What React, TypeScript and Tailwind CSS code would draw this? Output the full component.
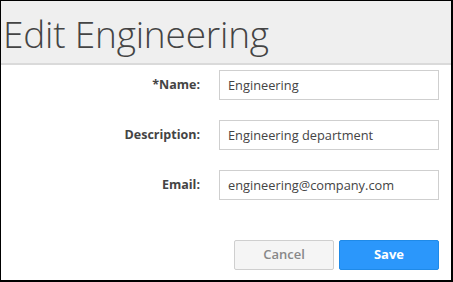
export default function App() {
  const fields = [
    { label: "*Name:", value: "Engineering" },
    { label: "Description:", value: "Engineering department" },
    { label: "Email:", value: "engineering@company.com" },
  ];

  return (
    <div className="box-border h-[282px] w-[453px] border-b-2 border-l border-r-2 border-t border-black bg-white font-['Open_Sans',sans-serif] text-[#444]">
      <div className="box-border flex h-[64px] items-center border-b-2 border-[#dadada] bg-[#efefef] pl-[2px] pt-[2px]">
        <h1 className="text-[37px] font-light leading-none tracking-[-0.2px] text-[#444]">Edit Engineering</h1>
      </div>
      <form className="pt-[5px]" onSubmit={(e) => e.preventDefault()}>
        <div className="flex flex-col gap-5">
          {fields.map((f) => (
            <div key={f.label} className="flex items-center">
              <label className="w-[199px] text-right text-[12.5px] font-bold text-[#444]">{f.label}</label>
              <input
                readOnly
                value={f.value}
                className="ml-[19px] box-border h-[30px] w-[220px] border border-[#cfcfcf] bg-white px-[8px] text-[12.8px] text-[#444] outline-none"
              />
            </div>
          ))}
        </div>
        <div className="mt-10 flex justify-end gap-[5px] pr-[12px]">
          <button type="button" className="box-border h-[30px] w-[100px] rounded-[2px] border border-[#cfcfcf] bg-[#f5f5f5] text-[13px] font-semibold text-[#888]">
            Cancel
          </button>
          <button type="submit" className="box-border h-[30px] w-[100px] rounded-[2px] border border-[#1f8ae8] bg-[#2b97fb] text-[13px] font-bold text-white">
            Save
          </button>
        </div>
      </form>
    </div>
  );
}
